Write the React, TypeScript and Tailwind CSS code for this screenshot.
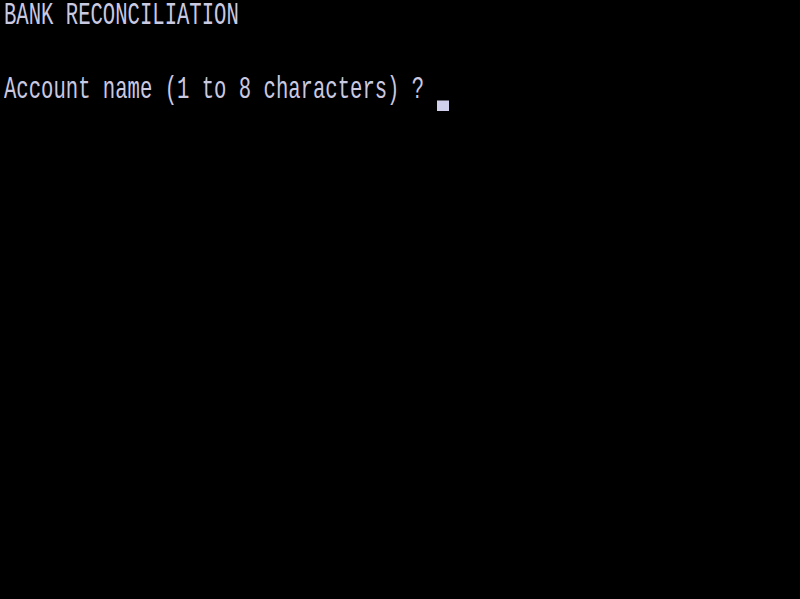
import React from "react";

export default function App() {
  return (
    <div className="w-[800px] h-[599px] bg-black overflow-hidden pl-[4px]">
      <div
        className="origin-top-left scale-y-150 text-[20.6px] leading-[24.67px] text-[#c9c9e2] whitespace-pre"
        style={{ fontFamily: '"Liberation Mono", monospace' }}
      >
        <div className="leading-[21.6px]">BANK RECONCILIATION</div>
        <div className="h-[26.2px]" />
        <div>
          Account name (1 to 8 characters) ?{" "}
          <span className="inline-block w-[12.5px] h-[7.4px] bg-[#d0d0ec] align-[-9.5px]" />
        </div>
      </div>
    </div>
  );
}
